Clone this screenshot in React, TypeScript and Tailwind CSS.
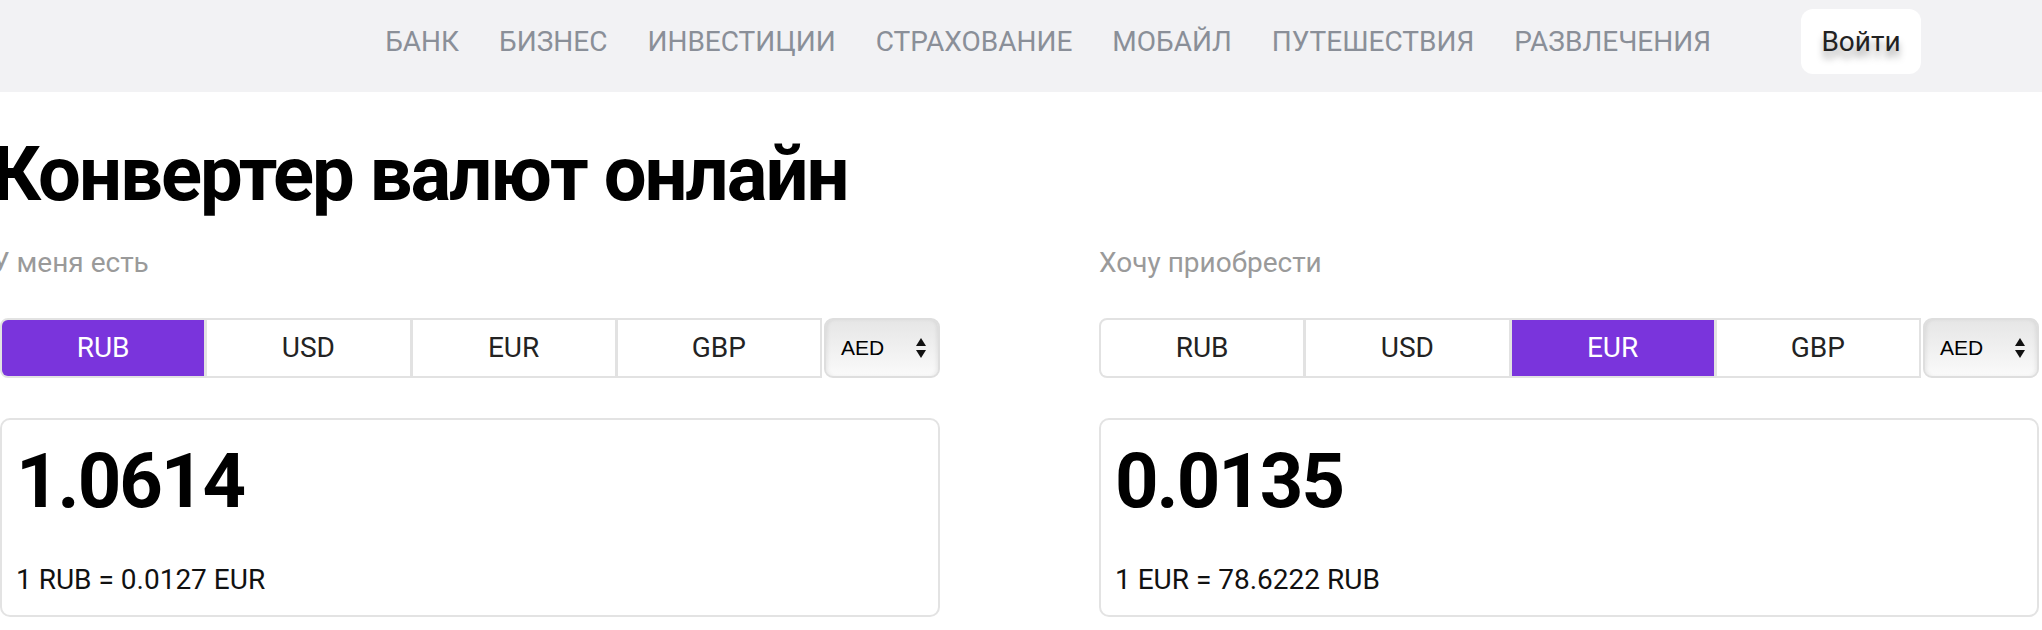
import React from "react";

const navItems = ["БАНК", "БИЗНЕС", "ИНВЕСТИЦИИ", "СТРАХОВАНИЕ", "МОБАЙЛ", "ПУТЕШЕСТВИЯ", "РАЗВЛЕЧЕНИЯ"];
const currencies = ["RUB", "USD", "EUR", "GBP"];

function CurrencyPicker({ active }: { active: string }) {
  return (
    <div className="flex h-[60px] gap-[2px]">
      <div className="flex flex-1 gap-[3px] overflow-hidden rounded-l-[8px] border-2 border-[#e2e2e2] bg-[#e2e2e2]">
        {currencies.map((c) => (
          <button
            key={c}
            className={
              c === active
                ? "flex-1 bg-[#7a34dc] text-[28px] text-white"
                : "flex-1 bg-white text-[28px] text-[#232323]"
            }
          >
            {c}
          </button>
        ))}
      </div>
      <div className="flex w-[116px] items-center justify-between rounded-[9px] border-2 border-[#dedede] bg-gradient-to-b from-[#e6e6e6] to-[#fafafa] pl-[15px] pr-[12px] shadow-[inset_3px_0_4px_-2px_rgba(0,0,0,0.08),inset_-3px_0_4px_-2px_rgba(0,0,0,0.08)] font-['Liberation_Sans',sans-serif] text-[21px] text-black">
        <span>AED</span>
        <svg width="10" height="20" viewBox="0 0 10 20">
          <polygon points="5,0 10,8 0,8" fill="#111" />
          <polygon points="0,12 10,12 5,20" fill="#111" />
        </svg>
      </div>
    </div>
  );
}

function Column({ label, active, value, rate, shift }: { label: string; active: string; value: string; rate: string; shift?: boolean }) {
  return (
    <div className="flex flex-col">
      <p className={shift ? "-ml-2 text-[28px] leading-[32px] text-[#9a9a9a]" : "text-[28px] leading-[32px] text-[#9a9a9a]"}>{label}</p>
      <div className="mt-[39px]">
        <CurrencyPicker active={active} />
      </div>
      <div className="mt-[40px] rounded-[10px] border-2 border-[#e3e3e3] px-[14px] pt-[17px] pb-[19px]">
        <div className="text-[76px] font-bold leading-[88px] tracking-[-2px] text-black">{value}</div>
        <div className="mt-[39px] text-[28px] leading-[32px] text-[#111]">{rate}</div>
      </div>
    </div>
  );
}

export default function App() {
  return (
    <div className="h-[630px] w-[2042px] overflow-hidden bg-white font-['Roboto',sans-serif]">
      <header className="flex h-[92px] items-start justify-end bg-[#f2f2f4] pr-[121px] pt-[9px]">
        <ul className="flex h-[65px] items-center gap-[40px]">
          {navItems.map((n) => (
            <li key={n} className="text-[28px] text-[#8a8f98]">
              <a href="#">{n}</a>
            </li>
          ))}
        </ul>
        <button className="ml-[90px] h-[65px] w-[120px] rounded-[12px] bg-white text-[28px] text-[#222] [text-shadow:0_7px_7px_rgba(0,0,0,0.35)]">
          Войти
        </button>
      </header>
      <main>
        <h1 className="-ml-2 mt-[38px] text-[76px] font-bold leading-[88px] tracking-[-2px] text-black">Конвертер валют онлайн</h1>
        <div className="mt-[29px] grid grid-cols-[940px_940px] gap-[159px]">
          <Column label="У меня есть" active="RUB" value="1.0614" rate="1 RUB = 0.0127 EUR" shift />
          <Column label="Хочу приобрести" active="EUR" value="0.0135" rate="1 EUR = 78.6222 RUB" />
        </div>
      </main>
    </div>
  );
}
